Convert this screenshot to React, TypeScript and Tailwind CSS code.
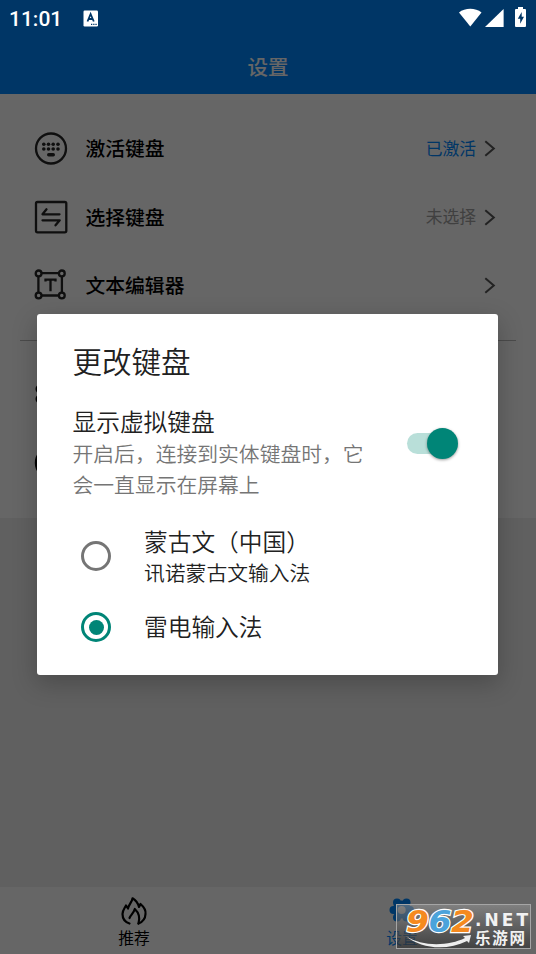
import type { ReactNode } from 'react';

const KeyboardIcon = () => (
  <svg width="34" height="34" viewBox="0 0 34 34" fill="none" stroke="#262626" strokeWidth="2.3">
    <circle cx="17" cy="17.5" r="15" />
    <g fill="#262626" stroke="none">
      {[9.8, 14.5, 19.2, 24].map((x) => (
        <g key={x}>
          <circle cx={x} cy="13.3" r="1.8" />
          <circle cx={x} cy="18" r="1.8" />
        </g>
      ))}
      <rect x="13" y="22" width="8" height="3.4" rx="1.7" />
    </g>
  </svg>
);

const SwapIcon = () => (
  <svg width="34" height="34" viewBox="0 0 34 34" fill="none" stroke="#262626" strokeWidth="2.3" strokeLinecap="round" strokeLinejoin="round">
    <rect x="2" y="2" width="30.3" height="30.3" rx="1.5" />
    <path d="M25.5 14.3H8.5l4-5M8.5 20.3h17.2l-4.2 5" />
  </svg>
);

const TextIcon = () => (
  <svg width="34" height="34" viewBox="0 0 34 34" fill="none" stroke="#262626" strokeWidth="2.3">
    <path d="M7.5 5.2h17M7.5 27.5h17M4.4 8v17M27.9 8v17" />
    <circle cx="4.6" cy="5.4" r="2.9" />
    <circle cx="27.8" cy="5.4" r="2.9" />
    <circle cx="4.6" cy="27.5" r="2.9" />
    <circle cx="27.8" cy="27.5" r="2.9" />
    <path d="M11.5 13.5v-1.8h10v1.8M16.5 11.7v11.5" />
  </svg>
);

const GearIcon = () => (
  <svg width="34" height="34" viewBox="0 0 34 34" fill="none" stroke="#000" strokeWidth="3">
    <circle cx="6" cy="12" r="3" />
    <circle cx="6" cy="22" r="3" />
    <circle cx="26" cy="12" r="3" />
    <circle cx="26" cy="22" r="3" />
  </svg>
);

const AboutIcon = () => (
  <svg width="34" height="34" viewBox="0 0 34 34" fill="none" stroke="#000" strokeWidth="3">
    <circle cx="17.3" cy="17" r="15" />
  </svg>
);

type RowProps = { icon: ReactNode; label?: string; value?: string; active?: boolean };

const Row = ({ icon, label, value, active }: RowProps) => (
  <div className="flex h-[68.6px] items-center pr-10 pl-[34px]">
    {icon}
    <span className="mb-px ml-[17.5px] text-[19.8px] font-medium text-black">{label}</span>
    <span className={`ml-auto text-[16.8px] ${active ? 'text-[#0088ff]' : 'text-[#a0a0a0]'}`}>{value}</span>
    <svg className="ml-2" width="12" height="18" viewBox="0 0 12 18" fill="none" stroke="#555" strokeWidth="2">
      <path d="M1.3 2.3 9.8 9.500l-8.500 7.200" />
    </svg>
  </div>
);

const StatusBar = () => (
  <div className="absolute inset-x-0 top-0 z-20 flex h-9 items-center pr-2.5 pl-[9px] text-white">
    <span className="w-[73.5px] pt-px font-[Roboto] text-[21px] leading-9 font-medium">11:01</span>
    <svg width="16" height="17" viewBox="0 0 16 17">
      <rect x="0.5" y="0.5" width="14.5" height="16" rx="1.2" fill="#fff" />
      <path d="M4.5 11.5 7.6 4l3.2 7.5M5.7 9h4" fill="none" stroke="#003666" strokeWidth="1.8" />
      <path d="M8 14.3h6" stroke="#003666" strokeWidth="1.2" strokeDasharray="1.3 .9" />
    </svg>
    <svg className="ml-auto" width="67" height="22" viewBox="0 0 67 22" fill="#fff">
      <path d="M0 5.500C6 .5 16.500.5 22.500 5.500L11.300 19.500Z" />
      <path d="M44.600 2v18H26Z" />
      <path d="M59 0h5v2h2q1 0 1 1v16q0 1-1 1h-9q-1 0-1-1V3q0-1 1-1h2Z" />
      <path d="M62.700 5 58.800 11.700h2.400v5L65 9.700h-2.300Z" fill="#003666" />
    </svg>
  </div>
);

const FlameIcon = () => (
  <svg width="28" height="30" viewBox="0 0 28 30" fill="none" stroke="#000" strokeWidth="2.2" strokeLinecap="round" strokeLinejoin="round">
    <path d="M9.500 27.500C5 26 2.500 22 2.500 18c0-3.500 2-5.500 3.500-8.500L8 12.500C9 8 12 6 12.500 2.300c3 1.700 5.500 5 6.500 8.700l1.500-3C24 11 26 14 25.500 18c-.2 4.500-3 8-7 9.500" />
    <path d="M9.500 22c1.500-3.500 4-4.500 5.300-9C18.500 16.500 20.500 21 18.500 27.500" />
  </svg>
);

const SettingsTabIcon = () => (
  <svg width="28" height="30" viewBox="0 0 28 30">
    <g fill="#0088ff">
      <circle cx="9" cy="6.5" r="4" />
      <circle cx="18.5" cy="6.5" r="4" />
      <circle cx="5.5" cy="14" r="4" />
      <circle cx="22" cy="14" r="4" />
      <circle cx="9" cy="21.5" r="4" />
      <circle cx="18.5" cy="21.5" r="4" />
      <circle cx="13.7" cy="13.5" r="9" />
    </g>
    <circle cx="13.7" cy="14" r="4" fill="#fff" />
  </svg>
);

const Watermark = () => (
  <div className="absolute top-[904px] left-[396px] z-30 h-[45px] w-[135px] border border-[#a5a5a5] bg-linear-to-b from-[#999]/50 to-[#303030]/65">
    <svg className="overflow-visible" width="133" height="43" viewBox="0 0 133 43">
      <g fontFamily="DejaVu Sans" fontWeight="bold" fontStyle="italic" fontSize="31" stroke="#fff" strokeWidth="2.4" paintOrder="stroke">
        <text x="9" y="26.8" textLength="23" lengthAdjust="spacingAndGlyphs" fill="#f58a1f">9</text>
        <text x="31.5" y="26.8" textLength="23" lengthAdjust="spacingAndGlyphs" fill="#4ba3db">6</text>
        <text x="54" y="26.8" textLength="23" lengthAdjust="spacingAndGlyphs" fill="#f58a1f">2</text>
      </g>
      <path d="M9 31c16 11 43 10 59 2l-2-2 8-1-2 8-2-2C50 46 24 44 9 31Z" fill="#eee" />
      <text x="78" y="20.5" textLength="53" fontFamily="DejaVu Sans" fontWeight="bold" fontSize="17" fill="#f2f2f2">.NET</text>
      <text x="78" y="39" textLength="50" fontFamily="Noto Sans CJK SC" fontWeight="bold" fontSize="15.5" fill="#f2f2f2">乐游网</text>
    </svg>
  </div>
);

const KeyboardDialog = () => (
  <div
    role="dialog"
    className="absolute top-[314px] left-[37px] z-20 h-[361px] w-[461px] rounded-[3px] bg-white pt-[24px] pr-9 pl-[35.5px] text-[#212121] shadow-[0_8px_24px_1px_rgba(0,0,0,0.22)]"
  >
    <h2 className="text-[29.5px] leading-[44px] font-[350]">更改键盘</h2>
    <div className="mt-[22px] flex">
      <div className="w-[300px] shrink-0">
        <div className="text-[23.7px] leading-[34px] font-[350]">显示虚拟键盘</div>
        <p className="text-[20.8px] leading-[31px] font-[350] whitespace-nowrap text-[#757575]">
          开启后，连接到实体键盘时，它
          <br />
          会一直显示在屏幕上
        </p>
      </div>
      <div className="mt-[29px] ml-[34.5px] h-[21px] w-[42px] rounded-full bg-[#b9dfd9]">
        <div className="-mt-[5px] ml-[20px] size-[31px] rounded-full bg-[#008577] shadow-[0_1px_3px_rgba(0,0,0,0.4)]" />
      </div>
    </div>
    <div className="mt-[24px] flex items-center pl-[8.5px]">
      <span className="size-[30px] rounded-full border-3 border-[#757575]" />
      <div className="ml-[33px] font-[350]">
        <div className="text-[23.7px] leading-[34px]">蒙古文（中国）</div>
        <div className="text-[20.8px] leading-[29px]">讯诺蒙古文输入法</div>
      </div>
    </div>
    <div className="mt-[22px] flex items-center pl-[8.5px]">
      <span className="flex size-[30px] items-center justify-center rounded-full border-3 border-[#008577]">
        <span className="size-[15px] rounded-full bg-[#008577]" />
      </span>
      <span className="mb-px ml-[33px] text-[23.7px] leading-[35px] font-[350]">雷电输入法</span>
    </div>
  </div>
);

export default function App() {
  return (
    <div className="relative flex h-[954px] w-[536px] flex-col overflow-hidden bg-[#f0f0f0] font-['Noto_Sans_CJK_SC',sans-serif]">
      <StatusBar />
      <header className="flex h-[94px] shrink-0 items-end justify-center bg-[#0088ff] pb-[13px] text-[20.5px] leading-[30px] font-medium text-white">
        设置
      </header>
      <main className="h-[424px] bg-white pt-5">
        <Row icon={<KeyboardIcon />} label="激活键盘" value="已激活" active />
        <Row icon={<SwapIcon />} label="选择键盘" value="未选择" />
        <Row icon={<TextIcon />} label="文本编辑器" />
        <hr className="mx-5 mt-5 mb-[19px] border-[#bbb]" />
        <Row icon={<GearIcon />} />
        <Row icon={<AboutIcon />} />
      </main>
      <nav className="mt-auto grid h-[67px] grid-cols-2 bg-white pt-[9px] text-[15.8px] leading-6">
        <div className="flex flex-col items-center text-black">
          <FlameIcon />
          推荐
        </div>
        <div className="flex flex-col items-center text-[#0088ff]">
          <SettingsTabIcon />
          设置
        </div>
      </nav>
      <div className="absolute inset-0 z-10 bg-black/60" />
      <KeyboardDialog />
      <Watermark />
    </div>
  );
}
